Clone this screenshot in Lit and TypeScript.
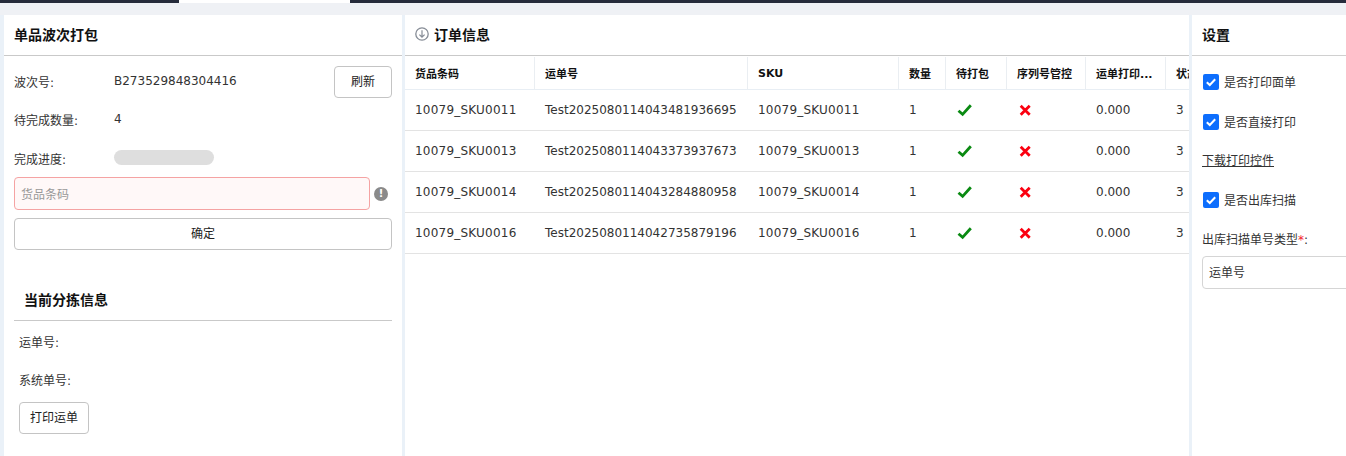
import { LitElement, html, css, svg } from "lit";
import { customElement } from "lit/decorators.js";

const rows = [
  ["10079_SKU0011", "Test2025080114043481936695"],
  ["10079_SKU0013", "Test2025080114043373937673"],
  ["10079_SKU0014", "Test2025080114043284880958"],
  ["10079_SKU0016", "Test2025080114042735879196"],
];
const heads = ["货品条码", "运单号", "SKU", "数量", "待打包", "序列号管控", "运单打印...", "状态"];

const check = svg`<path d="M1.5 7.8 L5.6 11.4 L13.8 2.2" fill="none" stroke="#0a8a12" stroke-width="2.8"/>`;
const cross = svg`<path d="M2.7 2.7 L11.7 11.7 M11.7 2.7 L2.7 11.7" fill="none" stroke="#fb0010" stroke-width="2.8"/>`;

@customElement("app-root")
export class AppRoot extends LitElement {
  static styles = css`
    :host { display: block; width: 1346px; height: 456px; overflow: hidden; background: #eaf1f8;
      font-family: "DejaVu Sans", "Noto Sans CJK SC", sans-serif; font-size: 12px; color: #333; }
    .top { height: 3px; background: #262b3b; display: flex; }
    .top .tab { width: 171px; margin-left: 179px; background: #fff; }
    .band { height: 12px; background: #eff1f5; }
    .main { display: flex; height: 441px; padding-left: 4px; gap: 3px; }
    .panel { background: #fff; height: 100%; flex: none; overflow: hidden; }
    .left { width: 398px; }
    .mid { width: 784px; }
    .right { width: 154px; }
    .title { height: 38px; padding-bottom: 2px; border-bottom: 1px solid #c9c9c9; display: flex; align-items: center;
      font-size: 14px; font-weight: 700; color: #111; padding-left: 10px; gap: 5px; }
    .right .title { border-bottom-color: #d0d0d0; }
    .body { padding: 0 10px; }
    .f { display: flex; }
    .lab { width: 100px; flex: none; }
    .r1 { height: 33px; padding-top: 10px; align-items: flex-start; justify-content: space-between; }
    .r1 .val { flex: 1; padding-top: 8px; }
    .r1 .lab { padding-top: 7px; }
    .btn { border: 1px solid #c4c4c4; border-radius: 4px; background: #fff; font: inherit; color: #222; height: 32px; box-sizing: border-box; padding: 0 0 3px; }
    .refresh { width: 58px; }
    .r2 { margin-top: 14px; height: 20px; }
    .r2 .val { color: #333; margin-top: -1px; }
    .r2 .lab { margin-top: -2px; }
    .r3 { margin-top: 18px; height: 20px; }
    .r3 .lab { margin-top: -1px; }
    .bar { width: 100px; height: 15px; border-radius: 8px; background: #dedede; margin-top: -1px; }
    .inp-row { display: flex; align-items: center; margin-top: 6px; }
    .inp { width: 356px; height: 33px; box-sizing: border-box; border: 1px solid #f5a3a3; border-radius: 4px; background: #fff8f8;
      color: #999; padding-left: 6px; display: flex; align-items: center; }
    .warn { width: 14px; height: 14px; border-radius: 50%; background: #8a8a8a; color: #fff; font-size: 10px; font-weight: 700;
      margin-left: 4px; display: flex; align-items: center; justify-content: center; }
    .ok { width: 378px; margin-top: 8px; display: block; height: 32px; }
    .sub { font-size: 14px; font-weight: 700; color: #111; height: 30px; margin-top: 40px; padding-left: 10px; border-bottom: 1px solid #c9c9c9;
      line-height: 20px; }
    .info { padding-left: 5px; }
    .info .l { height: 18px; line-height: 18px; }
    .l1 { margin-top: 13px; }
    .l2 { margin-top: 20px; }
    .print { width: 70px; margin-top: 12px; display: block; }
    .tbl { display: grid; grid-template-columns: 130px 213px 151px 47px 61px 79px 80px 60px; width: 821px; margin-top: 1px; }
    .wrap { overflow: hidden; width: 784px; }
    .th { height: 33px; box-sizing: border-box; border-right: 1px solid #eaeef2; border-bottom: 1px solid #e8eef4; font-size: 11px;
      font-weight: 700; color: #111; padding-left: 10px; display: flex; align-items: center; white-space: nowrap; overflow: hidden; }
    .td { height: 41px; box-sizing: border-box; border-bottom: 1px solid #e3e3e3; padding-left: 10px; display: flex; align-items: center; white-space: nowrap; }
    .td svg { display: block; margin-left: 1px; margin-bottom: 1px; }
    .sku { letter-spacing: .22px; }
    .checks { padding: 0 10px; }
    .ck { display: flex; align-items: center; gap: 5px; height: 16px; }
    .ck span { margin-bottom: 2px; }
    .box { width: 16px; height: 16px; border-radius: 2px; background: #0d6efd; flex: none; margin-left: 1px; }
    .req { color: #f5222d; }
    a { color: #333; text-decoration: underline; display: block; line-height: 16px; }
    .c1 { margin-top: 18px; } .c2 { margin-top: 24px; } .c3 { margin-top: 23px; }
    .dl { margin-top: 23px; }
    .tp { margin-top: 24px; line-height: 16px; white-space: nowrap; }
    .sel { width: 200px; height: 33px; box-sizing: border-box; border: 1px solid #d5d5d5; border-radius: 4px; margin-top: 8px;
      padding: 0 0 2px 6px; display: flex; align-items: center; }
  `;

  private box() {
    return html`<svg class="box" viewBox="0 0 16 16"><path d="M3.8 8.2 L6.8 11 L12.2 5.2" fill="none" stroke="#fff" stroke-width="2"/></svg>`;
  }

  render() {
    return html`
      <div class="top"><div class="tab"></div></div>
      <div class="band"></div>
      <div class="main">
        <section class="panel left">
          <div class="title">单品波次打包</div>
          <div class="body">
            <div class="f r1"><span class="lab">波次号:</span><span class="val">B273529848304416</span><button class="btn refresh">刷新</button></div>
            <div class="f r2"><span class="lab">待完成数量:</span><span class="val">4</span></div>
            <div class="f r3"><span class="lab">完成进度:</span><div class="bar"></div></div>
            <div class="inp-row"><div class="inp">货品条码</div><div class="warn">!</div></div>
            <button class="btn ok">确定</button>
            <div class="sub">当前分拣信息</div>
            <div class="info">
              <div class="l l1">运单号:</div>
              <div class="l l2">系统单号:</div>
              <button class="btn print">打印运单</button>
            </div>
          </div>
        </section>
        <section class="panel mid">
          <div class="title">
            <svg width="14" height="14" viewBox="0 0 14 14"><circle cx="7" cy="7" r="6.2" fill="none" stroke="#868c96" stroke-width="1.3"/><path d="M7 3.2V10M4.4 7.6L7 10.2L9.6 7.6" fill="none" stroke="#868c96" stroke-width="1.2"/></svg>
            订单信息
          </div>
          <div class="wrap">
            <div class="tbl">
              ${heads.map((h) => html`<div class="th">${h}</div>`)}
              ${rows.map(
                (r) => html`
                  <div class="td sku">${r[0]}</div>
                  <div class="td">${r[1]}</div>
                  <div class="td sku">${r[0]}</div>
                  <div class="td">1</div>
                  <div class="td"><svg width="16" height="14" viewBox="0 0 16 14">${check}</svg></div>
                  <div class="td"><svg width="14" height="14" viewBox="0 0 14 14">${cross}</svg></div>
                  <div class="td">0.000</div>
                  <div class="td">3</div>
                `,
              )}
            </div>
          </div>
        </section>
        <section class="panel right">
          <div class="title">设置</div>
          <div class="checks">
            <div class="ck c1">${this.box()}<span>是否打印面单</span></div>
            <div class="ck c2">${this.box()}<span>是否直接打印</span></div>
            <a class="dl">下载打印控件</a>
            <div class="ck c3">${this.box()}<span>是否出库扫描</span></div>
            <div class="tp">出库扫描单号类型<span class="req">*</span>:</div>
            <div class="sel">运单号</div>
          </div>
        </section>
      </div>
    `;
  }
}
